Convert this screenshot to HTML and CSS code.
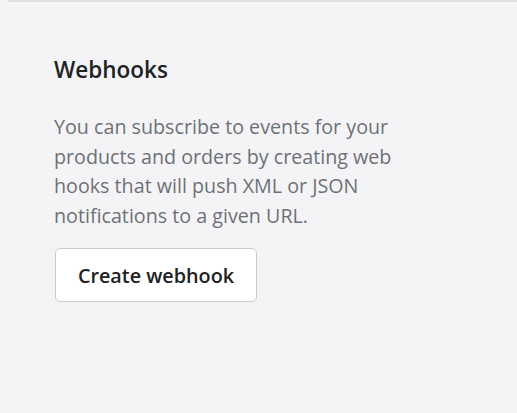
FILE: index.html
```html
<!DOCTYPE html>
<html lang="en">
<head>
    <meta charset="UTF-8">
    <meta name="viewport" content="width=device-width, initial-scale=1.0">
    <title>Webhooks</title>
    <link rel="stylesheet" href="styles.css">
</head>
<body>
    <div class="page">
        <section class="webhooks">
            <h2>Webhooks</h2>
            <p>You can subscribe to events for your products and orders by creating web hooks that will push XML or JSON notifications to a given URL.</p>
            <button class="btn">Create webhook</button>
        </section>
    </div>
</body>
</html>
```

FILE: styles.css
```css
*{
    margin: 0;padding: 0;box-sizing: border-box;
}
body{
    width: 100%;
    height: 100vh;
    background-color: #f4f4f6;
    font-family: "Open Sans", "Noto Sans", sans-serif;
}
.page{
    margin-left: 8px;
    border-top: 2px solid #e0e0e3;
    height: 100%;
}
.webhooks{
    padding: 54px 0 0 46px;
    width: 400px;
}
.webhooks>h2{
    font-size: 22.5px;
    font-weight: 600;
    color: #202223;
    line-height: 28px;
}
.webhooks>p{
    margin-top: 28px;
    width: 350px;
    font-size: 19.7px;
    line-height: 29.5px;
    color: #6d7175;
}
.btn{
    display: block;
    margin-top: 18px;
    margin-left: 1px;
    width: 202px;
    height: 54px;
    background-color: white;
    border: 1px solid #c9cccf;
    border-radius: 5px;
    font-family: inherit;
    font-size: 19.8px;
    font-weight: 600;
    color: #202223;
}
```
